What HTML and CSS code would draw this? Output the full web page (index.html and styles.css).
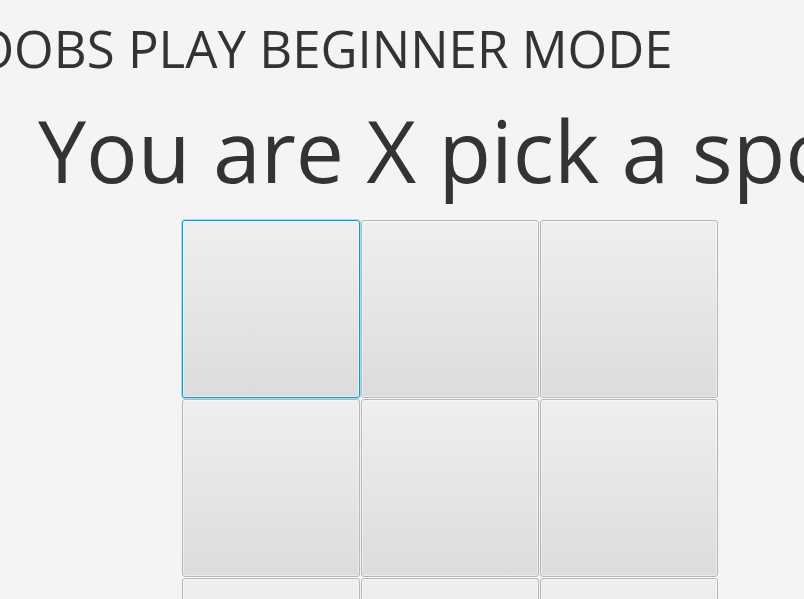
FILE: index.html
```html
<!DOCTYPE html>
<html>
<head>
<meta charset="utf-8">
<link rel="stylesheet" href="styles.css">
</head>
<body>
<div class="app">
  <div class="title">NOOBS PLAY BEGINNER MODE</div>
  <div class="prompt">You are X pick a spot</div>
  <div class="board">
    <button class="cell focused"></button>
    <button class="cell"></button>
    <button class="cell"></button>
    <button class="cell"></button>
    <button class="cell"></button>
    <button class="cell"></button>
    <button class="cell"></button>
    <button class="cell"></button>
    <button class="cell"></button>
  </div>
</div>
</body>
</html>
```
FILE: styles.css
```css
html, body {
  margin: 0;
  padding: 0;
  background: #f4f4f4;
  overflow: hidden;
}
.app {
  width: 804px;
  height: 599px;
  overflow: hidden;
  font-family: "Open Sans", "Noto Sans", sans-serif;
  color: #333333;
}
.title {
  font-size: 51px;
  line-height: 60px;
  height: 60px;
  padding-top: 18px;
  margin-left: -64px;
  white-space: nowrap;
}
.prompt {
  font-size: 86px;
  line-height: 100px;
  height: 100px;
  margin-top: 22px;
  margin-left: 38px;
  white-space: nowrap;
}
.board {
  display: grid;
  grid-template-columns: repeat(3, 178px);
  grid-auto-rows: 178px;
  gap: 1px;
  margin-top: 20px;
  margin-left: 182px;
}
.cell {
  box-sizing: border-box;
  width: 178px;
  height: 178px;
  padding: 0;
  margin: 0;
  border: 1px solid #b6b6b6;
  border-radius: 3px;
  background: linear-gradient(to bottom, #efefef, #dcdcdc);
  box-shadow: inset 0 0 0 1px rgba(255, 255, 255, 0.45), 0 1px 0 rgba(255, 255, 255, 0.8);
  outline: none;
}
.cell.focused {
  border-color: #039ed3;
  box-shadow: inset 0 0 0 1px rgba(255, 255, 255, 0.45), 0 0 0 1px rgba(3, 158, 211, 0.3);
}
```
